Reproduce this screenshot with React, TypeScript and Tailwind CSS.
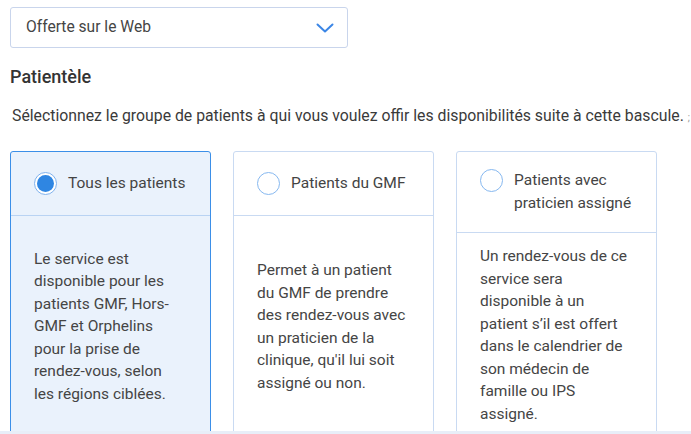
import React from "react";

const cards = [
  {
    title: "Tous les patients",
    body: "Le service est disponible pour les patients GMF, Hors-GMF et Orphelins pour la prise de rendez-vous, selon les régions ciblées.",
    selected: true,
  },
  {
    title: "Patients du GMF",
    body: "Permet à un patient du GMF de prendre des rendez-vous avec un praticien de la clinique, qu'il lui soit assigné ou non.",
    selected: false,
  },
  {
    title: "Patients avec praticien assigné",
    body: "Un rendez-vous de ce service sera disponible à un patient s’il est offert dans le calendrier de son médecin de famille ou IPS assigné.",
    selected: false,
  },
];

function Radio({ selected }: { selected: boolean }) {
  if (selected) {
    return (
      <span className="flex h-[23px] w-[23px] shrink-0 items-center justify-center rounded-full border border-[#7fb2ee] bg-white">
        <span className="block h-[17px] w-[17px] rounded-full bg-[#2f86e2]" />
      </span>
    );
  }
  return <span className="block h-[23px] w-[23px] shrink-0 rounded-full border-[1.5px] border-[#86b8f0] bg-white" />;
}

export default function App() {
  return (
    <div
      className="flex h-[434px] w-[691px] flex-col overflow-hidden bg-white text-[#444]"
      style={{ fontFamily: "Roboto, 'Liberation Sans', sans-serif" }}
    >
      <div className="flex-1 overflow-hidden pl-[10px] pt-[7px]">
        <div className="flex h-[41px] w-[338px] items-center justify-between rounded-[3px] border border-[#c9d5ec] pl-[15px] pr-[13px]">
          <span className="text-[15.6px] text-[#454545]">Offerte sur le Web</span>
          <svg width="18" height="10" viewBox="0 0 18 10" fill="none">
            <path d="M1.5 1.5 L9 8.5 L16.5 1.5" stroke="#3b86e6" strokeWidth="2" strokeLinecap="round" strokeLinejoin="round" />
          </svg>
        </div>
        <h2 className="mt-[18px] text-[18px] font-medium leading-[22px] text-[#333]">Patientèle</h2>
        <p className="mt-[17px] ml-[2px] whitespace-nowrap text-[15.8px] leading-[22px] text-[#3a3a3a]">
          Sélectionnez le groupe de patients à qui vous voulez offir les disponibilités suite à cette bascule.{" "}
          <span className="text-[10px] text-[#999]">;</span>
        </p>
        <div className="mt-[22px] flex items-stretch gap-[22px]">
          {cards.map((c) => (
            <div
              key={c.title}
              className={`flex w-[201px] shrink-0 flex-col rounded-[3px] border ${
                c.selected ? "border-[#3b8fe8] bg-[#eaf2fc]" : "border-[#c9daf2] bg-white"
              }`}
            >
              <div
                className={`flex min-h-[64px] items-start gap-[11px] border-b pl-[23px] pr-[10px] py-[17px] ${
                  c.selected ? "border-[#b9d3f3]" : "border-[#c9daf2]"
                }`}
              >
                <div className={c.title.length > 20 ? "pt-0" : "pt-[3px]"}>
                  <Radio selected={c.selected} />
                </div>
                <span className={`text-[15.5px] leading-[23px] text-[#444] ${c.title.length > 20 ? "pr-[12px]" : "pt-[3px]"}`}>
                  {c.title}
                </span>
              </div>
              <div className="flex flex-1 items-center pl-[23px] pr-[25px] py-[12px]">
                <p className="text-[15.5px] leading-[22.5px] text-[#454545]">{c.body}</p>
              </div>
            </div>
          ))}
        </div>
      </div>
      <div className="h-[3px] w-full shrink-0 bg-[#e8eef8]" />
    </div>
  );
}
